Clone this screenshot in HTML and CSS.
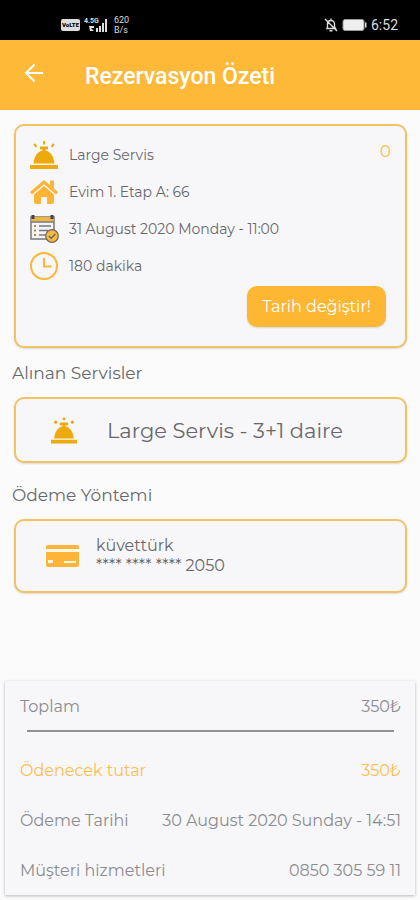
FILE: index.html
```html
<!DOCTYPE html>
<html lang="tr">
<head>
<meta charset="utf-8">
<meta name="viewport" content="width=device-width, initial-scale=1">
<title>Rezervasyon Özeti</title>
<link rel="stylesheet" href="styles.css">
</head>
<body>
<svg class="sprite" width="0" height="0" aria-hidden="true">
  <symbol id="bell" viewBox="0 0 28 28">
    <path d="M0 24h28v4H0zM3.500 22.500C4 15 8 10.500 12.500 9.500V8.500H10V5.500h8v3h-2.500v1C20 10.500 24 15 24.500 22.500z"/>
    <path d="M13 0h2v3.500h-2zM3.500 3.500l1.700-1.200 2 3.200L5.500 6.500zM24.500 3.500l-1.700-1.200-2 3.200 1.700 1z"/>
  </symbol>
  <symbol id="bell-dots" viewBox="0 0 28 28">
    <path d="M0 24h28v4H0zM3.500 22.500C4 15 8 10.500 12.500 9.500V8.500H9.500V5.500h9v3h-3v1C20 10.500 24 15 24.500 22.500z"/>
    <circle cx="14" cy="1.600" r="1.600"/><circle cx="5" cy="5" r="1.700"/><circle cx="23" cy="5" r="1.700"/>
  </symbol>
</svg>

<div class="status">
  <div class="status-side">
    <span class="volte">VoLTE</span>
    <svg width="26" height="16" viewBox="0 0 26 16" fill="#ddd" aria-hidden="true">
      <text class="net" x="0" y="6">4.5G</text>
      <path d="M5 9h5v2H7l3 3H6zM12 11h2v4h-2zM15 9h2v6h-2zM18 6h2v9h-2zM21 2h2v13h-2z"/>
    </svg>
    <span class="speed">620<br>B/s</span>
  </div>
  <div class="status-side">
    <svg width="14" height="14" viewBox="0 0 14 14" fill="none" stroke="#ddd" stroke-width="1.400" aria-hidden="true">
      <path d="M3 10.500h8.500L10.500 9V6C10.500 3.800 9 2.500 7 2.500S3.500 3.800 3.500 6v3zM7 .5v2M5.500 12.800h3M1 1l12 12"/>
    </svg>
    <svg width="25" height="12" viewBox="0 0 25 12" aria-hidden="true">
      <rect x="1" y=".5" width="21" height="11" rx="2" fill="#eee" stroke="#999"/><path d="M23 3.500h1.500v5H23z" fill="#ddd"/>
    </svg>
    <span class="clock">6:52</span>
  </div>
</div>

<header class="appbar">
  <button class="back" type="button" aria-label="Geri">
    <svg width="20" height="20" viewBox="0 0 20 20" fill="none" stroke="#fff" stroke-width="2" aria-hidden="true"><path d="M19 10H2M10.500 1.500L2 10l8.500 8.500"/></svg>
  </button>
  <h1>Rezervasyon Özeti</h1>
</header>

<main>
  <section class="card booking">
    <span class="count">0</span>
    <ul>
      <li><svg class="gold" width="28" height="28" aria-hidden="true"><use href="#bell"/></svg>Large Servis</li>
      <li><svg class="orange" width="28" height="28" viewBox="0 0 28 28" aria-hidden="true">
        <path d="M14 2L28 14l-2 2.500L14 6.200 2 16.500 0 14zM20 2.500h4v8l-4-3.500z"/>
        <path d="M14 8l10 8.500V24q0 2-2 2h-5v-7h-6v7H6q-2 0-2-2v-7.500z"/></svg>Evim 1. Etap A: 66</li>
      <li><svg width="30" height="30" viewBox="0 0 30 30" fill="none" aria-hidden="true">
        <path d="M1 3h23v22H1z" fill="#f4f4f6" stroke="#77777f" stroke-width="1.500"/>
        <path d="M1.500 3h22v4.500h-22z" fill="#f0b63c"/>
        <path d="M3 1v4M22 1v4" stroke="#444" stroke-width="3"/>
        <path d="M1 8h23M9 12h12M9 16.500h9M9 21h7" stroke="#77777f" stroke-width="1.500"/>
        <path d="M4 12h2M4 16.500h2M4 21h2" stroke="#a8893e" stroke-width="2"/>
        <circle cx="22" cy="22" r="6.300" fill="#f3bb45" stroke="#74664c" stroke-width="1.200"/>
        <path d="M18.800 22l2.300 2.300 4.300-4.300" stroke="#74664c" stroke-width="1.500"/></svg>31 August 2020 Monday - 11:00</li>
      <li><svg width="28" height="28" viewBox="0 0 28 28" fill="none" stroke="#fdb437" stroke-width="2" aria-hidden="true">
        <circle cx="14" cy="14" r="13"/><path d="M14 6v8.500h7.500"/></svg>180 dakika</li>
    </ul>
    <button class="change" type="button">Tarih değiştir!</button>
  </section>

  <h2>Alınan Servisler</h2>
  <section class="card service">
    <svg class="gold" width="26" height="27" aria-hidden="true"><use href="#bell-dots"/></svg>
    <span>Large Servis - 3+1 daire</span>
  </section>

  <h2 class="spaced">Ödeme Yöntemi</h2>
  <section class="card payment">
    <svg width="33" height="22" viewBox="0 0 33 22" aria-hidden="true">
      <rect width="33" height="22" rx="2" fill="#fdb437"/><path d="M0 4h33v3H0zM2 15h5v3H2zM18 16h12v2H18z" fill="#fff8e8"/>
    </svg>
    <p>küvettürk<br>**** **** **** 2050</p>
  </section>
</main>

<dl class="summary">
  <div class="row"><dt>Toplam</dt><dd>350₺</dd></div>
  <div class="row due"><dt>Ödenecek tutar</dt><dd>350₺</dd></div>
  <div class="row"><dt>Ödeme Tarihi</dt><dd>30 August 2020 Sunday - 14:51</dd></div>
  <div class="row"><dt>Müşteri hizmetleri</dt><dd>0850 305 59 11</dd></div>
</dl>
</body>
</html>
```
FILE: styles.css
```css
* { box-sizing: border-box; }

body {
  margin: 0;
  min-height: 100vh;
  display: flex;
  flex-direction: column;
  background: #fbfbfb;
  color: #68686c;
  font-family: Montserrat, Inter, sans-serif;
  font-size: 16px;
}

h1, h2, p, ul, dl, dd { margin: 0; padding: 0; }
button { border: 0; padding: 0; font: inherit; color: #fff; cursor: pointer; }
svg { flex: none; }
.sprite { position: absolute; }
.gold { fill: #eeaa0c; }
.orange { fill: #fdb437; }

.status {
  height: 40px;
  padding: 9px 22px 0 61px;
  display: flex;
  justify-content: space-between;
  align-items: center;
  background: #000;
  color: #ddd;
  font-family: Roboto, sans-serif;
}
.status-side { display: flex; align-items: center; gap: 4px; }
.volte {
  padding: 0 1px;
  border-radius: 2px;
  background: #ddd;
  color: #000;
  font-size: 6px;
  font-weight: 900;
  line-height: 12px;
}
.net { font-size: 7px; font-weight: 700; }
.speed { font-size: 9px; line-height: 10px; }
.clock { font-size: 14px; }

.appbar {
  height: 70px;
  padding: 0 24px;
  display: flex;
  align-items: center;
  gap: 41px;
  background: #fdb937;
  color: #fff;
}
.back { height: 24px; background: none; line-height: 0; margin-bottom: 4px; }
h1 { padding-top: 4px; font: 500 23px/32px Roboto, sans-serif; }

main { padding: 14px 13px 24px 14px; }
.card {
  border: 2px solid #f3c264;
  border-radius: 10px;
  background: #f7f7f9;
  box-shadow: 0 1px 2px #0002;
}
.booking {
  position: relative;
  padding: 10px 19px 19px 14px;
  display: flex;
  flex-direction: column;
}
.booking ul { list-style: none; }
.booking li {
  height: 37px;
  display: grid;
  grid-template-columns: 39px 1fr;
  align-items: center;
  font-size: 14px;
}
.count {
  position: absolute;
  top: 15px;
  right: 14px;
  color: #fdbd50;
  font-size: 17px;
}
.change {
  align-self: flex-end;
  margin-top: 2px;
  padding: 0 15px;
  height: 41px;
  border-radius: 10px;
  background: #fdb732;
  font-size: 16px;
  box-shadow: 0 1px 2px #0002;
}
h2 {
  margin-left: -2px;
  padding: 13px 0 12px;
  font-size: 17px;
  line-height: 24px;
  font-weight: 400;
}
.spaced { padding-top: 20px; }
.service {
  height: 66px;
  padding: 0 35px;
  display: flex;
  align-items: center;
  gap: 30px;
  font-size: 21px;
}
.payment {
  height: 74px;
  padding: 0 30px;
  display: flex;
  align-items: center;
  gap: 17px;
  line-height: 20px;
}

.summary {
  margin: auto 5px 5px;
  padding: 0 14px 0 15px;
  background: #f7f7f9;
  box-shadow: 0 1px 3px #0004;
  color: #8c8c90;
}
.row {
  height: 50px;
  display: flex;
  justify-content: space-between;
  align-items: center;
}
.row:first-child { height: 64px; padding-bottom: 14px; position: relative; }
.row:first-child::after {
  content: "";
  position: absolute;
  inset: 49px 7px auto;
  height: 2px;
  background: #929094;
}
.due { color: #fdbd50; }
```
